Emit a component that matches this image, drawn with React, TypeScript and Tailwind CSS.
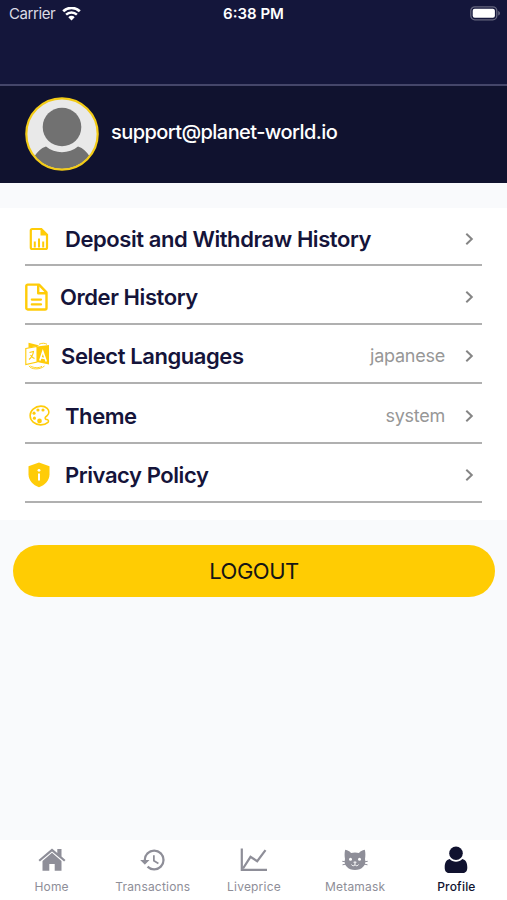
import type { ReactNode } from "react";
import { IoColorPaletteOutline } from "react-icons/io5";
import { MdHistory } from "react-icons/md";

function WifiIcon() {
  return (
    <svg width="19" height="14" viewBox="0 0 19 14" fill="none" stroke="white">
      <path d="M1.2 4.3a12 12 0 0 1 16.6 0" strokeWidth="2.7" />
      <path d="M4.1 7.700a7.8 7.8 0 0 1 10.8 0" strokeWidth="2.5" />
      <path d="M9.5 13.4 6.3 10.2a4.5 4.5 0 0 1 6.4 0z" fill="white" stroke="none" />
    </svg>
  );
}

function BatteryIcon() {
  return (
    <svg width="31" height="15" viewBox="0 0 31 15">
      <rect x="0.8" y="0.8" width="26" height="13" rx="4" fill="none" stroke="#65667f" strokeWidth="1.3" />
      <rect x="2.7" y="2.8" width="22.2" height="9" rx="2" fill="white" />
      <path d="M28.2 5v4.6c1-.4 1.8-1.2 1.8-2.3s-.8-1.9-1.8-2.3z" fill="#65667f" />
    </svg>
  );
}

function Avatar() {
  return (
    <svg width="74" height="74" viewBox="0 0 74 74">
      <defs>
        <clipPath id="avatar">
          <circle cx="37" cy="37" r="35" />
        </clipPath>
      </defs>
      <circle cx="37" cy="37" r="36" fill="#e9e9e9" />
      <g clipPath="url(#avatar)" fill="#717171">
        <circle cx="37" cy="30" r="19.3" />
        <path d="M9 60c3-5 7-9 12-10.500 9 7.500 23 7.500 32 0 5 1.500 9 5.500 12 10.500v14H9z" />
      </g>
      <circle cx="37" cy="37" r="35.7" fill="none" stroke="#f3cb16" strokeWidth="2.2" />
    </svg>
  );
}

function ReportIcon() {
  return (
    <svg width="20" height="24" viewBox="0 0 20 24" fill="none" stroke="#ffcc08" strokeWidth="2.2">
      <path d="M3.300 2h9l5.700 5.700v12.800a1.500 1.500 0 0 1-1.500 1.500H3.300A1.500 1.500 0 0 1 1.800 20.500v-17A1.500 1.500 0 0 1 3.300 2z" />
      <path d="M11.500 1.500V8.500h6.500z" fill="#ffcc08" stroke="none" />
      <path d="M5.800 14.500v6M10 11.500v9M14.200 14.500v6" strokeWidth="2" />
    </svg>
  );
}

function OrderIcon() {
  return (
    <svg width="24" height="28" viewBox="0 0 24 28" fill="none" stroke="#ffcc08" strokeWidth="2.4" strokeLinejoin="round">
      <path d="M2.700 1.600h11.300l7.500 7.800v15.700a1.400 1.400 0 0 1-1.400 1.400H2.700A1.400 1.400 0 0 1 1.300 25V3a1.400 1.400 0 0 1 1.400-1.400z" />
      <path d="M13.200 2v8.200h8.300" />
      <path d="M6.800 16.600h9.200M6.800 21.400h9.200" strokeLinecap="round" strokeWidth="2.200" />
    </svg>
  );
}

function LanguageIcon() {
  return (
    <svg width="26" height="28" viewBox="0 0 26 28" fill="none" stroke="#ffcc08">
      <path d="M.8 6.500 12 4.500v15.500L.8 22.500z" strokeWidth="1.100" />
      <path d="m12 4.500 12-1.500v19.500l-12-2.500z" fill="#ffcc08" stroke="none" />
      <path d="M3.500.8v5l11-2.300z" fill="#ffcc08" stroke="none" />
      <path d="M14 2.300c3-1.500 6-1.300 8 0M4 23.800c2 4 11 4.200 15.500.2M5.500 24c3 2 8.500 2.300 11.500.3" strokeWidth=".9" />
      <path d="M4.500 10.500l4-1c-.5 3.500-2 6-4.500 8M5.500 13c1 1.500 2.300 2.800 4 3.500" strokeWidth="1.100" />
      <path d="m14.800 18.500 3-9L21.300 19.500M16 15.700l4 .8" stroke="white" strokeWidth="1.600" />
    </svg>
  );
}

function ShieldIcon() {
  return (
    <svg width="22" height="26" viewBox="0 0 22 26">
      <path d="M11 .5 21.500 4.200v8c0 6-4.500 10.800-10.500 13C5 23 .5 18.200.5 12.200v-8z" fill="#ffcc08" />
      <circle cx="11" cy="8.300" r="1.400" fill="white" />
      <path d="M10 11.500h2v7h-2z" fill="white" />
    </svg>
  );
}

function Chevron() {
  return (
    <svg width="9" height="14" viewBox="0 0 9 14" fill="none" stroke="#858585" strokeWidth="2">
      <path d="m1.300 1.700 5.500 5.300-5.500 5.300" />
    </svg>
  );
}

function HomeIcon() {
  return (
    <svg width="28" height="24" viewBox="0 0 28 24" fill="#8e8e98">
      <path d="M14 .5 19.300 4.900V1h4.200v7.400l4 3.500-1.400 1.700L14 3.600 1.900 13.600.5 11.900z" />
      <path d="m14 4.700 9.500 8.200v9.900h-6.800v-6.800h-5.400v6.800H4.500v-9.900z" />
    </svg>
  );
}

function ChartIcon() {
  return (
    <svg width="28" height="24" viewBox="0 0 28 24" fill="none" stroke="#8e8e98" strokeWidth="2.2">
      <path d="M1.800.5v21.400H27" />
      <path d="m3 20.500 7.500-11.700 6.700 4.400 8.300-11" strokeWidth="2.2" />
    </svg>
  );
}

function CatIcon() {
  return (
    <svg width="26" height="22" viewBox="0 0 26 22">
      <path
        d="M3.200.8c2.600.3 4.600 1.700 5.800 3.200 2.500-.7 5.500-.7 8 0 1.200-1.500 3.200-2.900 5.800-3.200.8 3 .7 6.500.2 9.200 1.800 6.300-3.300 11-10 11S1.200 16.300 3 10C2.500 7.300 2.400 3.800 3.200.8z"
        fill="#8e8e98"
      />
      <path d="M.3 12.300 5 13M.5 15.800l5-1M25.700 12.300 21 13M25.500 15.800l-5-1" stroke="#8e8e98" strokeWidth="1" />
      <circle cx="8.500" cy="10.300" r="1.500" fill="white" />
      <circle cx="17.500" cy="10.300" r="1.500" fill="white" />
      <path d="M11.800 13h2.400L13 14.500zM13 14.500v1.500M9.500 15.500c.5 1.600 2.900 1.600 3.500.3.600 1.300 3 1.300 3.500-.3" fill="none" stroke="white" strokeWidth=".9" />
    </svg>
  );
}

function UserIcon() {
  return (
    <svg width="24" height="28" viewBox="0 0 24 28" fill="#10122f">
      <circle cx="12" cy="7.300" r="6.800" />
      <path d="M5.700 13c1.600 1.800 3.800 2.700 6.300 2.700s4.700-.9 6.300-2.700c3.500.7 5 4 5 8.500 0 3.200-1.400 5.500-4.200 5.500H4.900C2.100 27 .7 24.700.7 21.500c0-4.500 1.500-7.800 5-8.500z" />
    </svg>
  );
}

type RowProps = {
  icon: ReactNode;
  label: string;
  value?: string;
  className: string;
  iconClass: string;
};

function MenuRow({ icon, label, value, className, iconClass }: RowProps) {
  return (
    <button className={`flex w-full items-center border-b-2 border-[#b0b0b0] text-left ${className}`}>
      <span className={iconClass}>{icon}</span>
      <span className="flex-1 text-[22px] leading-7 font-semibold tracking-[-0.43px] whitespace-nowrap text-[#15143a]">
        {label}
      </span>
      {value && <span className="mr-5 text-lg leading-6 tracking-[-0.25px] text-[#979797]">{value}</span>}
      <span className="mr-2">
        <Chevron />
      </span>
    </button>
  );
}

const tabs = [
  { name: "Home", icon: <HomeIcon /> },
  { name: "Transactions", icon: <MdHistory size={28} /> },
  { name: "Liveprice", icon: <ChartIcon /> },
  { name: "Metamask", icon: <CatIcon /> },
  { name: "Profile", icon: <UserIcon />, active: true },
];

export default function App() {
  return (
    <div className="flex h-[900px] w-[507px] flex-col overflow-hidden bg-[#f9fafc] font-['Inter','Liberation_Sans',sans-serif]">
      <header className="h-[86px] shrink-0 border-b-2 border-[#45466a] bg-[#14163b] text-white">
        <div className="grid h-7 grid-cols-3 items-center pr-1.5 pl-[9px]">
          <div className="flex items-center gap-[7px]">
            <span className="text-[15px] tracking-[-0.4px] text-[#dcdce5]">Carrier</span>
            <WifiIcon />
          </div>
          <span className="pr-[3px] text-center text-[15px] font-semibold">6:38 PM</span>
          <div className="flex justify-end pb-0.5">
            <BatteryIcon />
          </div>
        </div>
      </header>

      <section className="flex h-[97px] shrink-0 items-center bg-[#10122f] pb-0.5 pl-[25px]">
        <Avatar />
        <span className="ml-3 pb-1 text-xl font-medium tracking-[-0.57px] text-white">support@planet-world.io</span>
      </section>

      <section className="mt-[25px] h-[312px] shrink-0 bg-white px-[25px]">
        <MenuRow icon={<ReportIcon />} label="Deposit and Withdraw History" className="h-[58px] pt-[5px]" iconClass="pr-4 pl-1" />
        <MenuRow icon={<OrderIcon />} label="Order History" className="h-[59px] pt-[5px]" iconClass="pr-[11px]" />
        <MenuRow icon={<LanguageIcon />} label="Select Languages" value="japanese" className="h-[59px] pt-1" iconClass="pr-2.5" />
        <MenuRow
          icon={<IoColorPaletteOutline size={25} color="#ffcc08" />}
          label="Theme"
          value="system"
          className="h-[60px] pt-[5px]"
          iconClass="pr-[13px] pl-0.5"
        />
        <MenuRow icon={<ShieldIcon />} label="Privacy Policy" className="h-[59px] pt-[5px]" iconClass="pr-[15px] pl-[3px]" />
      </section>

      <div className="pt-[25px] pr-3 pl-[13px]">
        <button className="h-[52px] w-full rounded-full bg-[#ffcc03] text-[22px] tracking-[-0.5px] text-[#151515]">
          LOGOUT
        </button>
      </div>

      <nav className="mt-auto grid h-[60px] shrink-0 grid-cols-5 bg-white pl-px">
        {tabs.map((tab) => (
          <button
            key={tab.name}
            className={`flex flex-col items-center ${tab.active ? "font-medium text-[#10122f]" : "text-[#8e8e98]"}`}
          >
            <span className="flex h-10 items-center">{tab.icon}</span>
            <span className="text-xs leading-[14px] tracking-[0.2px]">{tab.name}</span>
          </button>
        ))}
      </nav>
    </div>
  );
}
